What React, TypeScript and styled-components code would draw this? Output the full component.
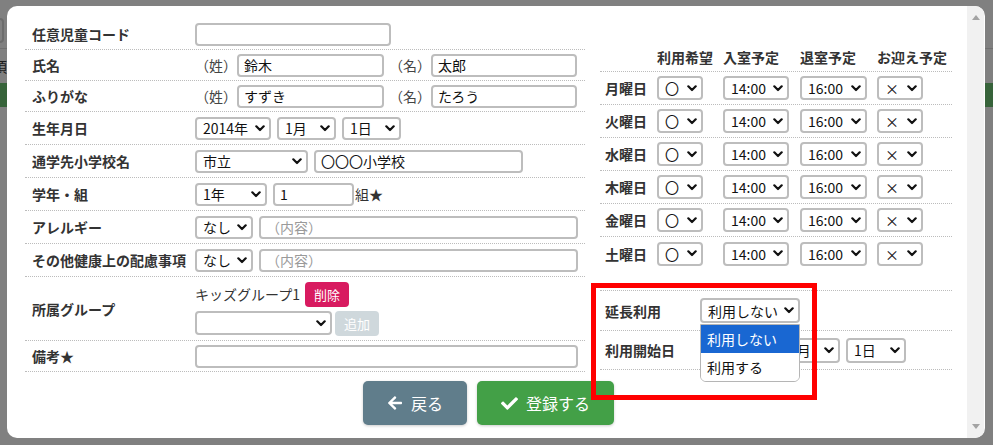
import React from "react";
import styled, { createGlobalStyle } from "styled-components";
import { FaArrowLeft, FaCheck } from "react-icons/fa";

const GlobalStyle = createGlobalStyle`
  html, body { margin: 0; padding: 0; }
  body {
    width: 993px;
    height: 445px;
    overflow: hidden;
    font-family: "Noto Sans CJK JP", "Noto Sans", sans-serif;
    color: #333;
  }
  * { box-sizing: border-box; }
  input, button { font-family: inherit; }
`;

const DAYS = ["月曜日", "火曜日", "水曜日", "木曜日", "金曜日", "土曜日"];

function Chevron() {
  return (
    <svg width="10" height="7" viewBox="0 0 10 7">
      <path d="M1.3 1.3 L5 5 L8.7 1.3" fill="none" stroke="#111" strokeWidth="2.2" strokeLinecap="round" strokeLinejoin="round" />
    </svg>
  );
}

function Select({ w, h = 23, children }: { w: number; h?: number; children?: React.ReactNode }) {
  return (
    <SelectBox $w={w} $h={h}>
      <span>{children}</span>
      <Chevron />
    </SelectBox>
  );
}

export default function App() {
  return (
    <>
      <GlobalStyle />
      <BgPage>
        <BgSearch />
        <BgRule />
        <BgText>頃</BgText>
        <BgHeader />
      </BgPage>
      <Modal>
        <Body>
          <Columns>
            <Form>
              <FormRow $h={31}>
                <Label>任意児童コード</Label>
                <Field>
                  <Input $w={196} />
                </Field>
              </FormRow>
              <FormRow $h={31}>
                <Label>氏名</Label>
                <Field $gap={5}>
                  <Pair>
                    <Paren>（姓）</Paren>
                    <Input $w={147} defaultValue="鈴木" />
                  </Pair>
                  <Pair>
                    <Paren>（名）</Paren>
                    <Input $w={146} defaultValue="太郎" />
                  </Pair>
                </Field>
              </FormRow>
              <FormRow $h={31}>
                <Label>ふりがな</Label>
                <Field $gap={5}>
                  <Pair>
                    <Paren>（姓）</Paren>
                    <Input $w={147} defaultValue="すずき" />
                  </Pair>
                  <Pair>
                    <Paren>（名）</Paren>
                    <Input $w={146} defaultValue="たろう" />
                  </Pair>
                </Field>
              </FormRow>
              <FormRow $h={33}>
                <Label>生年月日</Label>
                <Field>
                  <Select w={76}>2014年</Select>
                  <Select w={59}>1月</Select>
                  <Select w={59}>1日</Select>
                </Field>
              </FormRow>
              <FormRow $h={33}>
                <Label>通学先小学校名</Label>
                <Field>
                  <Select w={113}>市立</Select>
                  <Input $w={209} defaultValue="〇〇〇小学校" />
                </Field>
              </FormRow>
              <FormRow $h={33}>
                <Label>学年・組</Label>
                <Field>
                  <Select w={72}>1年</Select>
                  <Pair>
                    <Input $w={81} defaultValue="1" />
                    <Suffix>組★</Suffix>
                  </Pair>
                </Field>
              </FormRow>
              <FormRow $h={33}>
                <Label>アレルギー</Label>
                <Field>
                  <Select w={58}>なし</Select>
                  <Input $w={319} placeholder="（内容）" />
                </Field>
              </FormRow>
              <FormRow $h={33}>
                <Label>その他健康上の配慮事項</Label>
                <Field>
                  <Select w={58}>なし</Select>
                  <Input $w={319} placeholder="（内容）" />
                </Field>
              </FormRow>
              <FormRow $h={64}>
                <Label>所属グループ</Label>
                <GroupField>
                  <GroupLine>
                    <GroupName>キッズグループ1</GroupName>
                    <SmallButton $tone="danger">削除</SmallButton>
                  </GroupLine>
                  <GroupLine $gap={3}>
                    <Select w={137} h={24} />
                    <SmallButton $tone="disabled">追加</SmallButton>
                  </GroupLine>
                </GroupField>
              </FormRow>
              <FormRow $h={31}>
                <Label>備考★</Label>
                <Field>
                  <Input $w={383} />
                </Field>
              </FormRow>
            </Form>

            <Side>
              <WeekHead>
                <span />
                <HeadCell>利用希望</HeadCell>
                <HeadCell>入室予定</HeadCell>
                <HeadCell>退室予定</HeadCell>
                <HeadCell>お迎え予定</HeadCell>
              </WeekHead>
              {DAYS.map((d, i) => (
                <WeekRow key={d} $last={i === DAYS.length - 1}>
                  <DayLabel>{d}</DayLabel>
                  <Select w={46} h={24}>〇</Select>
                  <Select w={66} h={24}>14:00</Select>
                  <Select w={67} h={24}>16:00</Select>
                  <Select w={46} h={24}>×</Select>
                </WeekRow>
              ))}

              <Extra>
                <ExtraRow $h={40}>
                  <DayLabel>延長利用</DayLabel>
                  <Anchor>
                    <Select w={100} h={25}>利用しない</Select>
                    <OptionList>
                      <OptionItem $active>利用しない</OptionItem>
                      <OptionItem>利用する</OptionItem>
                    </OptionList>
                  </Anchor>
                </ExtraRow>
                <ExtraRow $h={39}>
                  <DayLabel>利用開始日</DayLabel>
                  <Field>
                    {/* year select sits under the open list */}
                    <Select w={75} h={25} />
                    <Select w={59} h={25}>1月</Select>
                    <Select w={60} h={25}>1日</Select>
                  </Field>
                </ExtraRow>
                <Highlight />
              </Extra>
            </Side>
          </Columns>

          <ButtonBar>
            <ActionButton $bg="#607d8b">
              <FaArrowLeft size={16} />
              戻る
            </ActionButton>
            <ActionButton $bg="#43a047">
              <FaCheck size={17} />
              登録する
            </ActionButton>
          </ButtonBar>
        </Body>
        <ScrollTrack>
          <svg width="8" height="5" viewBox="0 0 8 5">
            <path d="M0 5 L4 0 L8 5 Z" fill="#a3a3a3" />
          </svg>
          <svg width="8" height="5" viewBox="0 0 8 5">
            <path d="M0 0 L4 5 L8 0 Z" fill="#a3a3a3" />
          </svg>
        </ScrollTrack>
      </Modal>
    </>
  );
}

/* background page behind the dimmed overlay */
const BgPage = styled.div`
  height: 445px;
  background: #808080;
  display: flex;
  flex-direction: column;
  overflow: hidden;
`;
const BgSearch = styled.div`
  margin: 18px 0 0 -60px;
  width: 64px;
  height: 25px;
  border: 2px solid #6c6c6c;
  border-radius: 4px;
`;
const BgRule = styled.div`
  margin-top: 5px;
  height: 1px;
  background: #707070;
`;
const BgText = styled.div`
  margin: 6px 0 0 -7px;
  height: 22px;
  font-size: 14px;
  line-height: 22px;
  color: #1c1c1c;
`;
const BgHeader = styled.div`
  margin-top: 6px;
  height: 24px;
  background: #37633a;
`;

/* modal */
const Modal = styled.div`
  position: absolute;
  left: 7px;
  top: 6px;
  width: 978px;
  height: 432px;
  background: #fff;
  border-radius: 10px;
  overflow: hidden;
  display: flex;
`;
const Body = styled.div`
  flex: 1;
  padding: 13px 15px 0 18px;
  display: flex;
  flex-direction: column;
`;
const ScrollTrack = styled.div`
  width: 17px;
  margin-right: 1px;
  background: #f1f1f1;
  display: flex;
  flex-direction: column;
  justify-content: space-between;
  align-items: center;
  padding: 9px 0 9px;
`;
const Columns = styled.div`
  display: flex;
  gap: 15px;
  align-items: flex-start;
`;

/* left form */
const Form = styled.div`
  width: 560px;
  display: flex;
  flex-direction: column;
`;
const FormRow = styled.div<{ $h: number }>`
  display: grid;
  grid-template-columns: 170px 1fr;
  align-items: center;
  height: ${(p) => p.$h}px;
  border-bottom: 1px dotted #bcbcbc;
`;
const Label = styled.div`
  padding-left: 7px;
  font-size: 14px;
  font-weight: 700;
  color: #333;
  white-space: nowrap;
`;
const Field = styled.div<{ $gap?: number }>`
  display: flex;
  align-items: center;
  gap: ${(p) => p.$gap ?? 6}px;
`;
const Pair = styled.span`
  display: inline-flex;
  align-items: center;
`;
const Paren = styled.span`
  font-size: 14px;
  color: #444;
`;
const Suffix = styled.span`
  font-size: 14px;
  color: #333;
  margin-left: 1px;
`;
const Input = styled.input<{ $w: number }>`
  width: ${(p) => p.$w}px;
  height: 23px;
  border: 2px solid #bdbdbd;
  border-radius: 4px;
  padding: 0 5px;
  font-size: 14px;
  color: #111;
  background: #fff;
  outline: none;
  &::placeholder { color: #9a9a9a; }
`;
const SelectBox = styled.div<{ $w: number; $h: number }>`
  width: ${(p) => p.$w}px;
  height: ${(p) => p.$h}px;
  border: 2px solid #bdbdbd;
  border-radius: 4px;
  padding: 0 4px 0 6px;
  display: flex;
  align-items: center;
  justify-content: space-between;
  font-size: 14px;
  color: #111;
  background: #fff;
  white-space: nowrap;
  flex-shrink: 0;
`;
const GroupField = styled.div`
  display: flex;
  flex-direction: column;
  gap: 4px;
`;
const GroupLine = styled.div<{ $gap?: number }>`
  display: flex;
  align-items: center;
  gap: ${(p) => p.$gap ?? 5}px;
`;
const GroupName = styled.span`
  font-size: 14px;
  color: #333;
`;
const SmallButton = styled.button<{ $tone: "danger" | "disabled" }>`
  width: 44px;
  height: 25px;
  border: none;
  border-radius: 4px;
  font-size: 13px;
  padding: 0;
  color: #fff;
  background: ${(p) => (p.$tone === "danger" ? "#d81b60" : "#cfd8dc")};
`;

/* right side */
const Side = styled.div`
  width: 352px;
  margin-top: 22px;
  display: flex;
  flex-direction: column;
`;
const weekCols = "57px 66px 77px 77px 75px";
const WeekHead = styled.div`
  display: grid;
  grid-template-columns: ${weekCols};
  align-items: end;
  height: 31px;
  padding-bottom: 4px;
  border-bottom: 1px dotted #bcbcbc;
`;
const HeadCell = styled.div`
  font-size: 14px;
  font-weight: 700;
  color: #333;
  white-space: nowrap;
  line-height: 20px;
`;
const WeekRow = styled.div<{ $last?: boolean }>`
  display: grid;
  grid-template-columns: ${weekCols};
  align-items: center;
  height: 33px;
  border-bottom: ${(p) => (p.$last ? "none" : "1px dotted #bcbcbc")};
`;
const DayLabel = styled.div`
  padding-left: 5px;
  font-size: 14px;
  font-weight: 700;
  color: #333;
  white-space: nowrap;
`;
const Extra = styled.div`
  position: relative;
  margin-top: 20px;
  border-top: 1px dotted #bcbcbc;
`;
const ExtraRow = styled.div<{ $h: number }>`
  display: grid;
  grid-template-columns: 100px 1fr;
  align-items: center;
  height: ${(p) => p.$h}px;
  border-bottom: 1px dotted #bcbcbc;
`;
const Anchor = styled.div`
  position: relative;
  width: 100px;
`;
const OptionList = styled.div`
  position: absolute;
  top: calc(100% + 1px);
  left: 0;
  width: 100px;
  background: #fff;
  border: 1px solid #b5b5b5;
  border-radius: 0 0 6px 6px;
  overflow: hidden;
  z-index: 3;
`;
const OptionItem = styled.div<{ $active?: boolean }>`
  height: 28px;
  padding-left: 6px;
  display: flex;
  align-items: center;
  font-size: 14px;
  color: ${(p) => (p.$active ? "#fff" : "#111")};
  background: ${(p) => (p.$active ? "#1967d2" : "#fff")};
`;
const Highlight = styled.div`
  position: absolute;
  left: -9px;
  top: -8px;
  width: 226px;
  height: 117px;
  border: 5px solid #ff0000;
  pointer-events: none;
  z-index: 4;
`;

/* bottom buttons */
const ButtonBar = styled.div`
  margin-top: 9px;
  display: flex;
  justify-content: center;
  gap: 10px;
`;
const ActionButton = styled.button<{ $bg: string }>`
  height: 44px;
  padding: 0 24px;
  border: none;
  border-radius: 5px;
  background: ${(p) => p.$bg};
  color: #fff;
  font-size: 16px;
  display: flex;
  align-items: center;
  gap: 8px;
  box-shadow: 0 1px 3px rgba(0, 0, 0, 0.2);
`;
